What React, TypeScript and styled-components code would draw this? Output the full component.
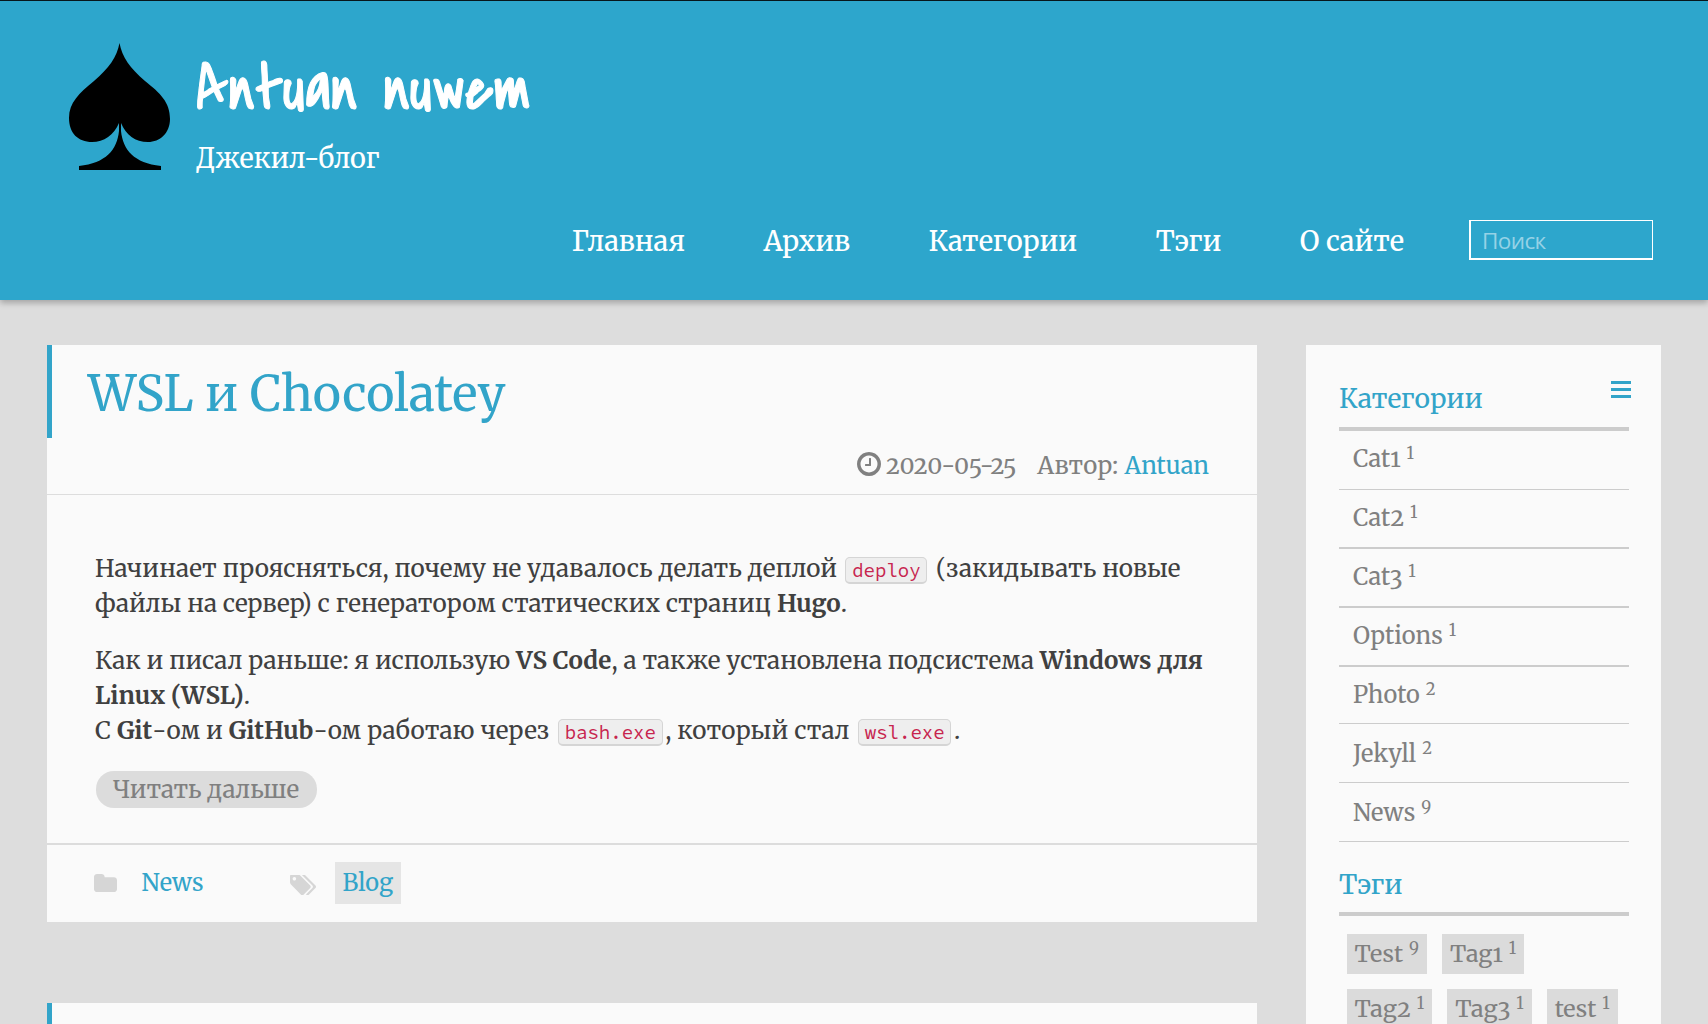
import React from "react";
import styled, { createGlobalStyle } from "styled-components";

const accent = "#32a4c9";
const serif = `Merriweather, "Noto Serif", "DejaVu Serif", serif`;

const GlobalStyle = createGlobalStyle`
  * { box-sizing: border-box; }
  html, body { margin: 0; padding: 0; }
  body {
    height: 1024px;
    overflow: hidden;
    background: #dddddd;
    color: #404040;
    font-family: ${serif};
    font-feature-settings: "onum" 1;
  }
`;

const Header = styled.header`
  display: flex;
  flex-direction: column;
  height: 300px;
  padding: 42px 55px 40px 68px;
  border-top: 1px solid #07161c;
  background: #2da6cc;
  color: #fff;
  box-shadow: 0 3px 6px rgba(0, 0, 0, 0.26);
`;

const Brand = styled.div`
  display: flex;
  gap: 26px;
  height: 127px;
`;

const Spade = styled.svg`
  width: 102px;
  height: 127px;
  flex: none;
  fill: #000;
`;

const BrandText = styled.div`
  display: flex;
  flex-direction: column;
  padding-top: 3px;
`;

const SiteTitle = styled.h1`
  margin: 0;
  font: 400 65.4px/87px "Covered By Your Grace", "Comic Neue", cursive;
  -webkit-text-stroke: 1px #fff;
  white-space: nowrap;
`;

const Tagline = styled.p`
  margin: 8px 0 0;
  font-size: 27.1px;
  font-weight: 450;
  line-height: 34px;
`;

const Nav = styled.nav`
  display: flex;
  align-items: center;
  justify-content: flex-end;
  gap: 78.5px;
  height: 40px;
  margin-top: auto;
`;

const NavLink = styled.a`
  color: #fff;
  font-size: 27.25px;
  font-weight: 500;
  line-height: 40px;
  padding-top: 2px;
  white-space: nowrap;
`;

const Search = styled.input`
  width: 184px;
  height: 40px;
  margin-left: -13.6px;
  padding: 2px 0 0 11px;
  border: solid #fff;
  border-width: 1px 1px 2px 2px;
  border-radius: 0;
  background: transparent;
  color: #fff;
  font: 22.5px "Open Sans", "Noto Sans", sans-serif;
  letter-spacing: -0.6px;
  &::placeholder { color: #96d2e6; opacity: 1; }
`;

const Main = styled.main`
  display: grid;
  grid-template-columns: 1210px 355px;
  gap: 49px;
  padding: 45px 47px 0;
`;

const Posts = styled.div`
  display: flex;
  flex-direction: column;
  gap: 81px;
`;

const Card = styled.article`
  height: 577px;
  flex: none;
  display: flex;
  flex-direction: column;
  background: #fafafa;
`;

const PostTitle = styled.h2`
  margin: 0;
  height: 93px;
  padding: 18px 0 0 36px;
  border-left: 5px solid ${accent};
  color: ${accent};
  font-size: 48.2px;
  font-weight: 400;
  line-height: 62px;
`;

const Meta = styled.div`
  display: flex;
  align-items: center;
  justify-content: flex-end;
  height: 57px;
  padding: 0 48px 1px 0;
  border-bottom: 1px solid #dddddd;
  color: #808080;
  font-size: 24px;
  line-height: 55px;
`;

const ClockIcon = styled.svg`
  width: 24px;
  height: 24px;
  margin: -3px 5.5px 0 0;
  fill: #808080;
`;

const PostDate = styled.time`
  margin-right: 21px;
  font-size: 24px;
`;

const AuthorLabel = styled.span`
  letter-spacing: 0.2px;
`;

const Author = styled.a`
  margin-left: 6px;
  color: ${accent};
  font-size: 23.7px;
`;

const Body = styled.div`
  flex: 1;
  padding: 57px 0 0 48px;
  font-size: 24.3px;
  line-height: 34.7px;
  white-space: nowrap;
`;

const Paragraph = styled.p`
  margin: 0 0 22.9px;
`;

const Line = styled.span<{ $track: number }>`
  display: block;
  letter-spacing: ${(p) => p.$track}px;
`;

const Strong = styled.strong`
  font-size: 24.1px;
  font-weight: 700;
  line-height: 1;
`;

const Code = styled.code`
  margin: 0 2.5px;
  padding: 0 5.8px;
  border: solid #d5d5d5;
  border-width: 1px 1px 2px;
  border-radius: 5px;
  background: #eeeeee;
  color: #c7254e;
  font: 19px/1 "Source Code Pro", "DejaVu Sans Mono", monospace;
  letter-spacing: 0;
`;

const ReadMore = styled.a`
  display: inline-block;
  height: 37px;
  margin-left: 1px;
  padding: 0 18px 0 17px;
  border-radius: 18px;
  background: #dcdcdc;
  color: #808080;
  font-size: 24.2px;
  line-height: 37px;
`;

const PostFooter = styled.footer`
  display: flex;
  align-items: center;
  height: 79px;
  padding: 0 0 0 47px;
  border-top: 2px solid #dcdcdc;
`;

const FootIcon = styled.svg<{ $w: number; $h: number; $drop?: number }>`
  width: ${(p) => p.$w}px;
  height: ${(p) => p.$h}px;
  margin-top: ${(p) => p.$drop ?? 0}px;
  flex: none;
  fill: #d6d6d6;
`;

const CategoryLink = styled.a`
  width: 173px;
  padding: 0 0 2px 24.6px;
  color: ${accent};
  font-size: 23.5px;
`;

const PostTag = styled.a`
  height: 42px;
  margin: -1px 0 0 19px;
  padding: 0 8px 0 7.5px;
  background: #e5e5e5;
  color: ${accent};
  font-size: 23.5px;
  line-height: 41px;
`;

const Sidebar = styled.aside`
  height: 700px;
  padding: 0 32px 0 33px;
  background: #fafafa;
`;

const SideHeading = styled.h3<{ $top: number; $bottom: number }>`
  display: flex;
  justify-content: space-between;
  margin: 0;
  padding: ${(p) => p.$top}px 0 ${(p) => p.$bottom}px;
  border-bottom: 4px solid #cccccc;
  color: ${accent};
  font-size: 26.45px;
  font-weight: 400;
  line-height: 36px;
`;

const MenuIcon = styled.svg`
  width: 20px;
  height: 17px;
  margin-right: -2px;
  fill: ${accent};
`;

const CategoryRow = styled.a<{ $rule: number; $height: number; $drop: number }>`
  display: block;
  height: ${(p) => p.$height}px;
  padding: ${(p) => p.$drop}px 0 0 14px;
  border-bottom: ${(p) => p.$rule}px solid #cccccc;
  color: #808080;
  font-size: 23.6px;
  line-height: 55.6px;
`;

const Count = styled.sup`
  margin-left: 6px;
  position: relative;
  top: -8px;
  font-size: 16.5px;
  font-feature-settings: "lnum" 1;
  line-height: 0;
  vertical-align: baseline;
`;

const TagCloud = styled.div`
  display: flex;
  flex-wrap: wrap;
  padding-top: 10.5px;
`;

const Tag = styled.a`
  height: 40px;
  margin: 7.5px;
  padding: 0 8px;
  background: #dbdbdb;
  color: #808080;
  font-size: 23.4px;
  line-height: 39px;
`;

const navItems = ["Главная", "Архив", "Категории", "Тэги", "О сайте"];

const categories = [
  { name: "Cat1", count: 1, rule: 1, height: 59, drop: 0 },
  { name: "Cat2", count: 1, rule: 2, height: 59, drop: 0 },
  { name: "Cat3", count: 1, rule: 2, height: 59, drop: 0 },
  { name: "Options", count: 1, rule: 2, height: 59, drop: 0 },
  { name: "Photo", count: 2, rule: 1, height: 57, drop: 0 },
  { name: "Jekyll", count: 2, rule: 1, height: 59, drop: 2 },
  { name: "News", count: 9, rule: 1, height: 59, drop: 2 },
];

const tags = [
  { name: "Test", count: 9 },
  { name: "Tag1", count: 1 },
  { name: "Tag2", count: 1 },
  { name: "Tag3", count: 1 },
  { name: "test", count: 1 },
];

export default function App() {
  return (
    <>
      <GlobalStyle />
      <Header>
        <Brand>
          <Spade viewBox="0 0 102 127">
            <path d="M51.500 0C54 14 62 25 77 38C92 50 102 59 102 76C102 90 92 99 80 99C67 99 58 92 53 80L53 88C55 107 66 120 93 123V127H11V123C38 120 49 107 51 88L51 80C46 92 36 99 24 99C10 99 1 90 1 75C1 60 11 50 26 38C41 25 49 14 51.500 0Z" />
          </Spade>
          <BrandText>
            <SiteTitle>Antuan nuwem</SiteTitle>
            <Tagline>Джекил-блог</Tagline>
          </BrandText>
        </Brand>
        <Nav>
          {navItems.map((item) => (
            <NavLink key={item}>{item}</NavLink>
          ))}
          <Search placeholder="Поиск" />
        </Nav>
      </Header>
      <Main>
        <Posts>
          <Card>
            <PostTitle>WSL и Chocolatey</PostTitle>
            <Meta>
              <ClockIcon viewBox="0 128 1536 1536">
                <path d="M896 544v448q0 14-9 23t-23 9h-320q-14 0-23-9t-9-23v-64q0-14 9-23t23-9h224v-352q0-14 9-23t23-9h64q14 0 23 9t9 23zm416 352q0-148-73-273t-198-198-273-73-273 73-198 198-73 273 73 273 198 198 273 73 273-73 198-198 73-273zm224 0q0 209-103 385.500t-279.500 279.500-385.500 103-385.500-103-279.500-279.500-103-385.500 103-385.500 279.500-279.500 385.500-103 385.500 103 279.500 279.500 103 385.500z" />
              </ClockIcon>
              <PostDate>2020-05-25</PostDate>
              <AuthorLabel>Автор:</AuthorLabel>
              <Author>Antuan</Author>
            </Meta>
            <Body>
              <Paragraph>
                <Line $track={0.07}>
                  Начинает проясняться, почему не удавалось делать деплой <Code>deploy</Code> (закидывать новые
                </Line>
                <Line $track={0.02}>
                  файлы на сервер) с генератором статических страниц <Strong>Hugo</Strong>.
                </Line>
              </Paragraph>
              <Paragraph>
                <Line $track={0.06}>
                  Как и писал раньше: я использую <Strong>VS Code</Strong>, а также установлена подсистема{" "}
                  <Strong>Windows для</Strong>
                </Line>
                <Line $track={0.12}>
                  <Strong>Linux (WSL)</Strong>.
                </Line>
                <Line $track={0.12}>
                  С <Strong>Git</Strong>-ом и <Strong>GitHub</Strong>-ом работаю через <Code>bash.exe</Code>, который
                  стал <Code>wsl.exe</Code>.
                </Line>
              </Paragraph>
              <ReadMore>Читать дальше</ReadMore>
            </Body>
            <PostFooter>
              <FootIcon $w={23} $h={18} $drop={-2} viewBox="0 128 1664 1408" preserveAspectRatio="none">
                <path d="M1664 608v704q0 92-66 158t-158 66h-1216q-92 0-158-66t-66-158v-960q0-92 66-158t158-66h320q92 0 158 66t66 158v32h672q92 0 158 66t66 158z" />
              </FootIcon>
              <CategoryLink>News</CategoryLink>
              <FootIcon $w={26} $h={20.5} $drop={3} viewBox="0 192 1899 1451">
                <path d="M448 448q0-53-37.500-90.500t-90.500-37.500-90.500 37.500-37.500 90.500 37.500 90.500 90.500 37.500 90.500-37.500 37.500-90.500zm1067 576q0 53-37 90l-491 492q-39 37-91 37-53 0-90-37l-715-716q-38-37-64.500-101t-26.500-117v-416q0-52 38-90t90-38h416q53 0 117 26.500t102 64.500l715 714q37 39 37 91zm384 0q0 53-37 90l-491 492q-39 37-91 37-36 0-59-14t-53-45l470-470q37-37 37-90 0-52-37-91l-715-714q-38-38-102-64.500t-117-26.500h224q53 0 117 26.500t102 64.500l715 714q37 39 37 91z" />
              </FootIcon>
              <PostTag>Blog</PostTag>
            </PostFooter>
          </Card>
          <Card>
            <PostTitle />
          </Card>
        </Posts>
        <Sidebar>
          <SideHeading $top={36} $bottom={10}>
            Категории
            <MenuIcon viewBox="0 0 20 17">
              <rect y="0" width="20" height="3" />
              <rect y="7" width="20" height="3" />
              <rect y="14" width="20" height="3" />
            </MenuIcon>
          </SideHeading>
          {categories.map((c) => (
            <CategoryRow key={c.name} $rule={c.rule} $height={c.height} $drop={c.drop}>
              {c.name}
              <Count>{c.count}</Count>
            </CategoryRow>
          ))}
          <SideHeading $top={25} $bottom={9}>
            Тэги
          </SideHeading>
          <TagCloud>
            {tags.map((t) => (
              <Tag key={t.name}>
                {t.name}
                <Count>{t.count}</Count>
              </Tag>
            ))}
          </TagCloud>
        </Sidebar>
      </Main>
    </>
  );
}
